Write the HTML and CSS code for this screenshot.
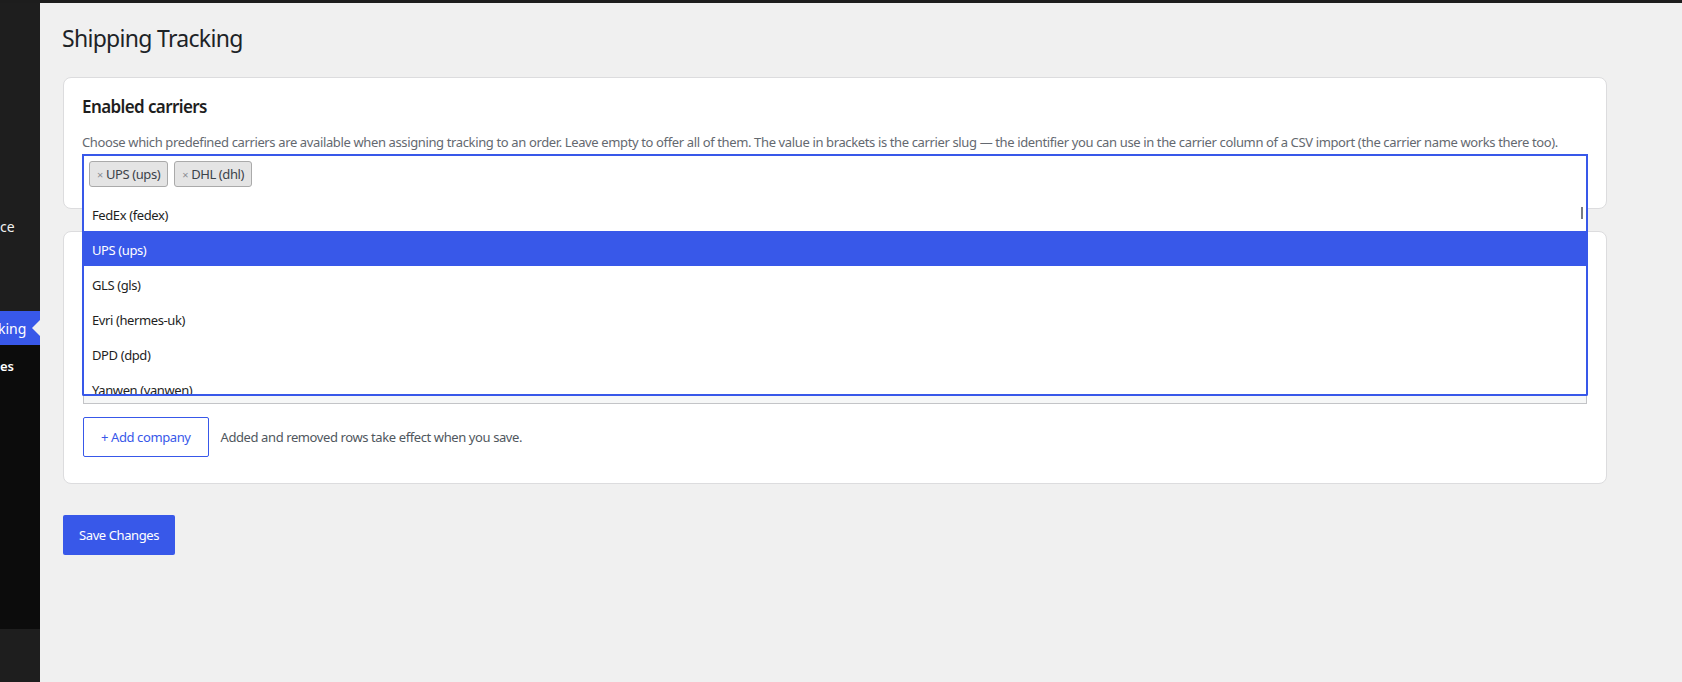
FILE: index.html
```html
<!doctype html>
<html>

<head>
    <meta charset="UTF-8" />
    <meta name="viewport" content="width=device-width, initial-scale=1.0" />
    <link rel="stylesheet" href="styles.css">
</head>

<body>
    <div class="topbar"></div>
    <div class="layout">
        <nav class="sidebar">
            <ul class="menu">
                <li class="menu__item menu__item--commerce">ce</li>
                <li class="menu__item menu__item--current">king</li>
            </ul>
            <ul class="submenu">
                <li class="submenu__item submenu__item--current">es</li>
            </ul>
        </nav>

        <main class="main">
            <h1 class="page-title">Shipping Tracking</h1>

            <section class="card card--carriers">
                <h2 class="card__title">Enabled carriers</h2>
                <p class="card__desc">Choose which predefined carriers are available when assigning tracking to an order. Leave empty to offer all of them. The value in brackets is the carrier slug — the identifier you can use in the carrier column of a CSV import (the carrier name works there too).</p>
                <div class="select">
                    <div class="select__control">
                        <span class="tag"><span class="tag__remove">×</span>UPS (ups)</span>
                        <span class="tag"><span class="tag__remove">×</span>DHL (dhl)</span>
                    </div>
                    <ul class="select__dropdown" role="listbox">
                        <li class="option">FedEx (fedex)</li>
                        <li class="option option--active">UPS (ups)</li>
                        <li class="option">GLS (gls)</li>
                        <li class="option">Evri (hermes-uk)</li>
                        <li class="option">DPD (dpd)</li>
                        <li class="option">Yanwen (yanwen)</li>
                        <span class="select__thumb"></span>
                    </ul>
                </div>
            </section>

            <section class="card card--companies">
                <!-- companies table sits under the open dropdown -->
                <table class="rates">
                    <thead>
                        <tr><th></th><th></th></tr>
                    </thead>
                    <tbody>
                        <tr><td></td><td></td></tr>
                        <tr><td></td><td></td></tr>
                        <tr><td></td><td></td></tr>
                    </tbody>
                </table>
                <div class="actions">
                    <button class="button button--secondary">+ Add company</button>
                    <span class="actions__hint">Added and removed rows take effect when you save.</span>
                </div>
            </section>

            <button class="button button--primary">Save Changes</button>
        </main>
    </div>
</body>

</html>
```

FILE: styles.css
```css
* {
    margin: 0;
    padding: 0;
    box-sizing: border-box;
}

body {
    background-color: #f0f0f0;
    color: #1e1e1e;
    font-family: "Noto Sans", "Open Sans", sans-serif;
    font-size: 13px;
    letter-spacing: -0.4px;
}

ul {
    list-style: none;
}

.topbar {
    height: 3px;
    background-color: #1d1d1d;
}

.layout {
    display: flex;
    min-height: 679px;
}

/* admin menu, only its narrow edge is on screen */
.sidebar {
    width: 40px;
    flex-shrink: 0;
    background-color: #1e1e1e;
    overflow: hidden;
    color: #f0f0f0;
    padding-top: 206px;
}

.menu__item {
    height: 34px;
    display: flex;
    align-items: center;
    white-space: nowrap;
    font-size: 14px;
    letter-spacing: 0;
    position: relative;
}

.menu__item--current {
    margin-top: 68px;
    background-color: #3858e9;
    color: #fff;
    margin-left: -2px;
    padding-left: 0;
}

.menu__item--current::after {
    content: "";
    position: absolute;
    right: 0;
    top: 9px;
    border: 8px solid transparent;
    border-right-color: #f0f0f0;
}

.submenu {
    background-color: #0c0c0c;
    height: 284px;
    padding: 7px 0;
}

.submenu__item {
    height: 28px;
    display: flex;
    align-items: center;
    white-space: nowrap;
    font-size: 13px;
    letter-spacing: 0;
}

.submenu__item--current {
    color: #fff;
    font-weight: 600;
}

.main {
    flex: 1;
    min-width: 0;
    padding: 20px 75px 40px 23px;
}

.page-title {
    font-size: 23px;
    line-height: 30px;
    font-weight: 400;
    letter-spacing: -0.7px;
    color: #1d2327;
    margin: 0 0 24px -1px;
}

.card {
    background-color: #fff;
    border: 1px solid #dcdcde;
    border-radius: 8px;
}

.card--carriers {
    padding: 17px 18px 12px;
}

.card--companies {
    margin-top: 22px;
    padding: 20px 19px 26px;
}

.card__title {
    font-size: 17px;
    line-height: 24px;
    font-weight: 600;
    letter-spacing: -0.6px;
    color: #1e1e1e;
    margin-bottom: 13px;
}

.card__desc {
    font-size: 13px;
    line-height: 20px;
    letter-spacing: -0.37px;
    color: #646970;
    margin-bottom: 2px;
}

.select {
    position: relative;
}

.select__control {
    display: flex;
    gap: 6px;
    padding: 5px 5px 9px;
    border: 2px solid #3858e9;
    border-bottom: 0;
}

.tag {
    display: inline-flex;
    align-items: center;
    gap: 3px;
    height: 26px;
    padding: 0 7px;
    background-color: #e4e4e4;
    border: 1px solid #aaa;
    border-radius: 3px;
    color: #3c434a;
    font-size: 13px;
}

.tag__remove {
    color: #8c8f94;
    font-size: 11px;
}

.select__dropdown {
    position: absolute;
    top: 100%;
    left: 0;
    right: 0;
    height: 200px;
    overflow: hidden;
    background-color: #fff;
    border: 2px solid #3858e9;
    border-top: 0;
    border-radius: 0 0 2px 2px;
    z-index: 1;
}

.option {
    height: 35px;
    padding-top: 3px;
    line-height: 32px;
    padding-left: 8px;
    font-size: 13px;
    color: #1e1e1e;
}

.option--active {
    background-color: #3858e9;
    color: #fff;
}

.select__thumb {
    position: absolute;
    right: 3px;
    top: 11px;
    width: 2px;
    height: 12px;
    background-color: #787c82;
}

.rates {
    width: 100%;
    border: 1px solid #c3c4c7;
    border-collapse: collapse;
}

.rates th {
    height: 40px;
}

.rates td {
    height: 37px;
}

.rates tbody tr:nth-child(odd) {
    background-color: #f6f7f7;
}

.actions {
    display: flex;
    align-items: center;
    gap: 12px;
    margin-top: 13px;
}

.actions__hint {
    color: #50575e;
    font-size: 13px;
}

.button {
    height: 40px;
    border-radius: 2px;
    font-family: inherit;
    font-size: 13px;
    letter-spacing: -0.4px;
    cursor: pointer;
}

.button--secondary {
    padding: 0 17px;
    background-color: #fff;
    border: 1px solid #3858e9;
    color: #3858e9;
}

.button--primary {
    margin-top: 31px;
    padding: 0 16px;
    background-color: #3858e9;
    border: 0;
    color: #fff;
}
```
